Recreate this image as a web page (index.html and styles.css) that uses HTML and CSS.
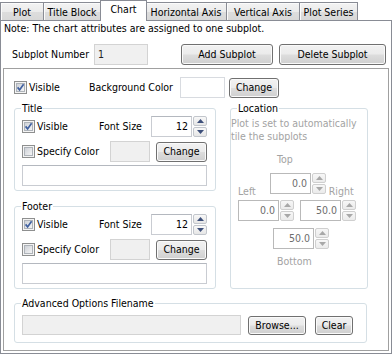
FILE: index.html
```html
<!DOCTYPE html>
<html>
<head>
<meta charset="utf-8">
<link rel="stylesheet" href="styles.css">
</head>
<body>
<svg class="defs" width="0" height="0" aria-hidden="true">
  <defs>
    <linearGradient id="cbfill" x1="0" y1="0" x2="1" y2="1">
      <stop offset="0" stop-color="#cbcfd5"/>
      <stop offset="1" stop-color="#f7f7f7"/>
    </linearGradient>
    <symbol id="cb-off" viewBox="0 0 13 13">
      <rect x="0.5" y="0.5" width="12" height="12" fill="#f4f4f4" stroke="#8e8f8f"/>
      <rect x="2.5" y="2.5" width="8" height="8" fill="url(#cbfill)" stroke="#aeb3b9"/>
    </symbol>
    <symbol id="cb-on" viewBox="0 0 13 13">
      <rect x="0.5" y="0.5" width="12" height="12" fill="#f4f4f4" stroke="#8e8f8f"/>
      <rect x="2.5" y="2.5" width="8" height="8" fill="url(#cbfill)" stroke="#aeb3b9"/>
      <path d="M3.6 6.4 L5.6 8.9 L9.6 3.2" fill="none" stroke="#4060a0" stroke-width="1.7"/>
    </symbol>
    <symbol id="up" viewBox="0 0 7 4"><path d="M0 4 L3.5 0 L7 4 Z"/></symbol>
    <symbol id="down" viewBox="0 0 7 4"><path d="M0 0 L3.5 4 L7 0 Z"/></symbol>
  </defs>
</svg>

<div class="tabs">
  <div class="tab">Plot</div>
  <div class="tab">Title Block</div>
  <div class="tab active">Chart</div>
  <div class="tab">Horizontal Axis</div>
  <div class="tab">Vertical Axis</div>
  <div class="tab">Plot Series</div>
</div>

<div class="panel">
  <div class="note">Note: The chart attributes are assigned to one subplot.</div>

  <div class="subplot-row">
    <span class="subplot-label">Subplot Number</span>
    <div class="box filled subplot-num">1</div>
    <button class="btn add-btn">Add Subplot</button>
    <button class="btn del-btn">Delete Subplot</button>
  </div>

  <div class="frame">
    <div class="main-row">
      <label class="check main-visible"><svg class="cb"><use href="#cb-on"/></svg><span>Visible</span></label>
      <span class="bg-label">Background Color</span>
      <div class="box white bg-box"></div>
      <button class="btn change main-change">Change</button>
    </div>

    <div class="cols">
      <div class="left-col">
        <fieldset class="group text-group">
          <legend>Title</legend>
          <div class="g-row">
            <label class="check vis"><svg class="cb"><use href="#cb-on"/></svg><span>Visible</span></label>
            <span class="fs-label">Font Size</span>
            <div class="spin">
              <div class="box white spin-box">12</div>
              <div class="spin-btns">
                <span class="sb"><svg><use href="#up"/></svg></span>
                <span class="sb"><svg><use href="#down"/></svg></span>
              </div>
            </div>
          </div>
          <div class="g-row row-b">
            <label class="check spec"><svg class="cb"><use href="#cb-off"/></svg><span>Specify Color</span></label>
            <div class="box filled color-box"></div>
            <button class="btn change grp-change">Change</button>
          </div>
          <div class="box white text-box"></div>
        </fieldset>

        <fieldset class="group text-group footer">
          <legend>Footer</legend>
          <div class="g-row">
            <label class="check vis"><svg class="cb"><use href="#cb-on"/></svg><span>Visible</span></label>
            <span class="fs-label">Font Size</span>
            <div class="spin">
              <div class="box white spin-box">12</div>
              <div class="spin-btns">
                <span class="sb"><svg><use href="#up"/></svg></span>
                <span class="sb"><svg><use href="#down"/></svg></span>
              </div>
            </div>
          </div>
          <div class="g-row row-b">
            <label class="check spec"><svg class="cb"><use href="#cb-off"/></svg><span>Specify Color</span></label>
            <div class="box filled color-box"></div>
            <button class="btn change grp-change">Change</button>
          </div>
          <div class="box white text-box"></div>
        </fieldset>
      </div>

      <fieldset class="group location">
        <legend>Location</legend>
        <p class="loc-note">Plot is set to automatically<br>tile the subplots</p>
        <div class="loc-lbl lbl-top">Top</div>
        <div class="spin dis spin-top">
          <div class="box dis-box spin-box">0.0</div>
          <div class="spin-btns">
            <span class="sb"><svg><use href="#up"/></svg></span>
            <span class="sb"><svg><use href="#down"/></svg></span>
          </div>
        </div>
        <div class="lr-labels">
          <span class="loc-lbl lbl-left">Left</span>
          <span class="loc-lbl lbl-right">Right</span>
        </div>
        <div class="lr-spins">
          <div class="spin dis">
            <div class="box dis-box spin-box">0.0</div>
            <div class="spin-btns">
              <span class="sb"><svg><use href="#up"/></svg></span>
              <span class="sb"><svg><use href="#down"/></svg></span>
            </div>
          </div>
          <div class="spin dis">
            <div class="box dis-box spin-box">50.0</div>
            <div class="spin-btns">
              <span class="sb"><svg><use href="#up"/></svg></span>
              <span class="sb"><svg><use href="#down"/></svg></span>
            </div>
          </div>
        </div>
        <div class="spin dis spin-bottom">
          <div class="box dis-box spin-box">50.0</div>
          <div class="spin-btns">
            <span class="sb"><svg><use href="#up"/></svg></span>
            <span class="sb"><svg><use href="#down"/></svg></span>
          </div>
        </div>
        <div class="loc-lbl lbl-bottom">Bottom</div>
      </fieldset>
    </div>

    <fieldset class="group advanced">
      <legend>Advanced Options Filename</legend>
      <div class="adv-row">
        <div class="box filled file-box"></div>
        <button class="btn browse">Browse...</button>
        <button class="btn clear">Clear</button>
      </div>
    </fieldset>
  </div>
</div>
</body>
</html>
```

FILE: styles.css
```css
* { box-sizing: border-box; }

html, body {
  margin: 0;
  padding: 0;
}

body {
  width: 392px;
  height: 354px;
  overflow: hidden;
  background: #ffffff;
  color: #000;
  font-family: "DejaVu Sans Condensed", "DejaVu Sans", sans-serif;
  font-stretch: condensed;
  font-size: 10.5px;
  line-height: 13px;
}

.defs { position: absolute; width: 0; height: 0; }

/* ---------- tabs ---------- */
.tabs {
  display: flex;
  align-items: flex-end;
  height: 20px;
}

.tab {
  height: 18px;
  border: 1px solid #898c95;
  border-bottom: none;
  border-left-width: 0;
  background: linear-gradient(#f3f3f3, #ebebeb 50%, #dddddd 51%, #d8d8d8);
  box-shadow: inset 1px 1px 0 #fbfbfb;
  text-align: center;
  line-height: 17px;
  padding-top: 1px;
}

.tab:first-child { border-left-width: 1px; }

.tab:nth-child(1) { width: 44px; }
.tab:nth-child(2) { width: 57px; }
.tab:nth-child(3) { width: 45px; }
.tab:nth-child(4) { width: 81px; }
.tab:nth-child(5) { width: 73px; }
.tab:nth-child(6) { width: 58px; }

.tab.active {
  height: 21px;
  margin-bottom: -1px;
  border-left-width: 1px;
  margin-left: -1px;
  margin-right: -1px;
  width: 47px;
  background: #ffffff;
  box-shadow: none;
  position: relative;
  z-index: 1;
  line-height: 17px;
  padding-top: 0;
}

.tab.active + .tab { border-left-width: 0; }

/* ---------- panel ---------- */
.panel {
  width: 392px;
  height: 334px;
  border: 1px solid #898c95;
  background: #ffffff;
  padding: 1px 2px 0 2px;
}

.note {
  padding-left: 1px;
  height: 13px;
}

.subplot-row {
  display: flex;
  align-items: center;
  margin-top: 9px;
  height: 21px;
}

.subplot-label { margin-left: 9px; width: 82px; }

.box {
  height: 21px;
  border: 1px solid #c9ccd2;
  border-top-color: #b4b8bf;
  background: #fff;
}

.box.filled {
  background: #f0f0f0;
  border-color: #d3d3d3;
}

.subplot-num {
  width: 54px;
  padding-left: 3px;
  line-height: 19px;
  color: #222;
}

.btn {
  font: inherit;
  font-stretch: condensed;
  color: #000;
  height: 20px;
  padding: 0;
  border: 1px solid #707070;
  border-radius: 3px;
  background: linear-gradient(#f2f2f2, #ebebeb 48%, #dddddd 52%, #cfcfcf);
  box-shadow: inset 0 0 0 1px #fafafa;
  text-align: center;
  line-height: 17px;
}

.add-btn { width: 92px; height: 21px; margin-left: 33px; }
.del-btn { width: 107px; height: 21px; margin-left: 6px; }

/* ---------- inner frame ---------- */
.frame {
  margin-top: 3px;
  width: 386px;
  height: 283px;
  border: 1px solid #a0a0a0;
  padding: 8px 0 0 10px;
}

.main-row {
  display: flex;
  align-items: center;
  height: 21px;
}

.check {
  display: flex;
  align-items: center;
  gap: 2px;
}

.cb { width: 13px; height: 13px; flex: none; }

.main-visible { width: 75px; }
.bg-label { width: 91px; }
.bg-box { width: 45px; border-color: #d8dbe0; }
.main-change { width: 50px; margin-left: 4px; }

.cols {
  display: flex;
  gap: 14px;
  margin-top: 3px;
}

.left-col {
  display: flex;
  flex-direction: column;
  gap: 8px;
}

.group {
  margin: 0;
  min-width: 0;
  border: 1px solid #d5dfe5;
  border-radius: 3px;
}

.group legend {
  padding: 0 1px;
  margin-left: -1px;
  line-height: 14px;
}

.text-group {
  width: 202px;
  padding: 1px 7px 4px 7px;
}

.g-row {
  display: flex;
  align-items: center;
  height: 21px;
}

.row-b { margin-top: 4px; }

.vis { width: 77px; }
.fs-label { width: 52px; }

.spin { display: flex; gap: 1px; }

.spin-box {
  width: 41px;
  text-align: right;
  padding-right: 3px;
  line-height: 19px;
}

.spin-btns {
  display: flex;
  flex-direction: column;
  gap: 1px;
  padding-top: 0;
}

.sb {
  width: 14px;
  height: 10px;
  border: 1px solid #c2c6cc;
  border-radius: 2px;
  background: linear-gradient(#f8f8f8, #e6e6e6);
  display: flex;
  align-items: center;
  justify-content: center;
}

.sb svg { width: 7px; height: 4px; fill: #3d4f7a; }

.spec { width: 88px; }
.color-box { width: 40px; }
.grp-change { width: 51px; margin-left: 6px; }

.text-box { margin-top: 3px; width: 185px; }

.footer { margin-top: 0; }

/* ---------- location ---------- */
.location {
  width: 138px;
  padding: 2px 0 0 0;
  color: #a3a3a3;
}

.location legend {
  color: #000;
  margin-left: 6px;
}

.loc-note { margin: 0; }

.loc-lbl { display: block; }

.lbl-top { margin: 10px 0 0 46px; }

.spin.dis .spin-box {
  background: #fff;
  border-color: #b9b9b9;
  color: #6d6d6d;
}

.spin.dis .sb { border-color: #cfcfcf; background: linear-gradient(#f7f7f7, #ebebeb); }
.spin.dis .sb svg { fill: #a8a8a8; }

.spin-top { margin: 7px 0 0 39px; }

.lr-labels {
  display: flex;
  margin-top: -9px;
  margin-left: 7px;
}

.lbl-right { margin-left: 73px; }

.lr-spins {
  display: flex;
  gap: 6px;
  margin: 2px 0 0 7px;
}

.spin-bottom { margin: 7px 0 0 42px; }

.lbl-bottom { margin: 6px 0 0 46px; }

/* ---------- advanced ---------- */
.advanced {
  width: 353px;
  margin-top: 7px;
  padding: 5px 7px 7px 7px;
}

.adv-row {
  display: flex;
  align-items: center;
  height: 20px;
}

.file-box { width: 219px; height: 20px; }
.browse { width: 58px; height: 19px; margin-left: 7px; }
.clear { width: 38px; height: 19px; margin-left: 9px; }
```
